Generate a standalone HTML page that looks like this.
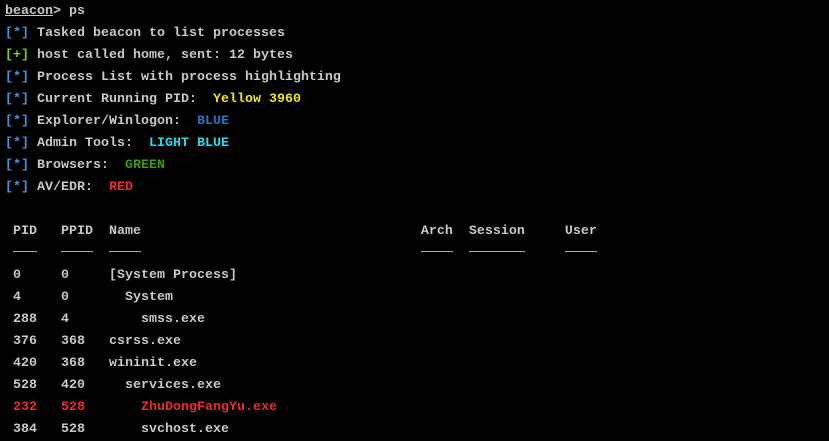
<!DOCTYPE html>
<html><head><meta charset="utf-8"><style>
html,body{margin:0;padding:0;background:#000;width:829px;height:437px;overflow:hidden}
pre{position:absolute;left:5px;top:1px;margin:0;font-family:"Liberation Mono",monospace;font-weight:bold;font-size:13.33px;line-height:22px;color:#c8c8c8;white-space:pre}
.b{color:#4a90d8}.g{color:#7ccc2c}.y{color:#f2e41c}.bl{color:#2f6ec8}.lb{color:#25dce8}.gr{color:#3c9a0c}.r{color:#ec2c2c}
u{text-decoration:underline}
.ul{position:absolute;top:251px;height:1px;background:#a8a8a8}
</style></head><body>
<pre><u>beacon</u>&gt; ps
<span class="b">[*]</span> Tasked beacon to list processes
<span class="g">[+]</span> host called home, sent: 12 bytes
<span class="b">[*]</span> Process List with process highlighting
<span class="b">[*]</span> Current Running PID:  <span class="y">Yellow 3960</span>
<span class="b">[*]</span> Explorer/Winlogon:  <span class="bl">BLUE</span>
<span class="b">[*]</span> Admin Tools:  <span class="lb">LIGHT BLUE</span>
<span class="b">[*]</span> Browsers:  <span class="gr">GREEN</span>
<span class="b">[*]</span> AV/EDR:  <span class="r">RED</span>

 PID   PPID  Name                                   Arch  Session     User

 0     0     [System Process]
 4     0       System
 288   4         smss.exe
 376   368   csrss.exe
 420   368   wininit.exe
 528   420     services.exe
<span class="r"> 232   528       ZhuDongFangYu.exe</span>
 384   528       svchost.exe</pre>
<div class="ul" style="left:13px;width:24px"></div>
<div class="ul" style="left:61px;width:32px"></div>
<div class="ul" style="left:109px;width:32px"></div>
<div class="ul" style="left:421px;width:32px"></div>
<div class="ul" style="left:469px;width:56px"></div>
<div class="ul" style="left:565px;width:32px"></div>
</body></html>
